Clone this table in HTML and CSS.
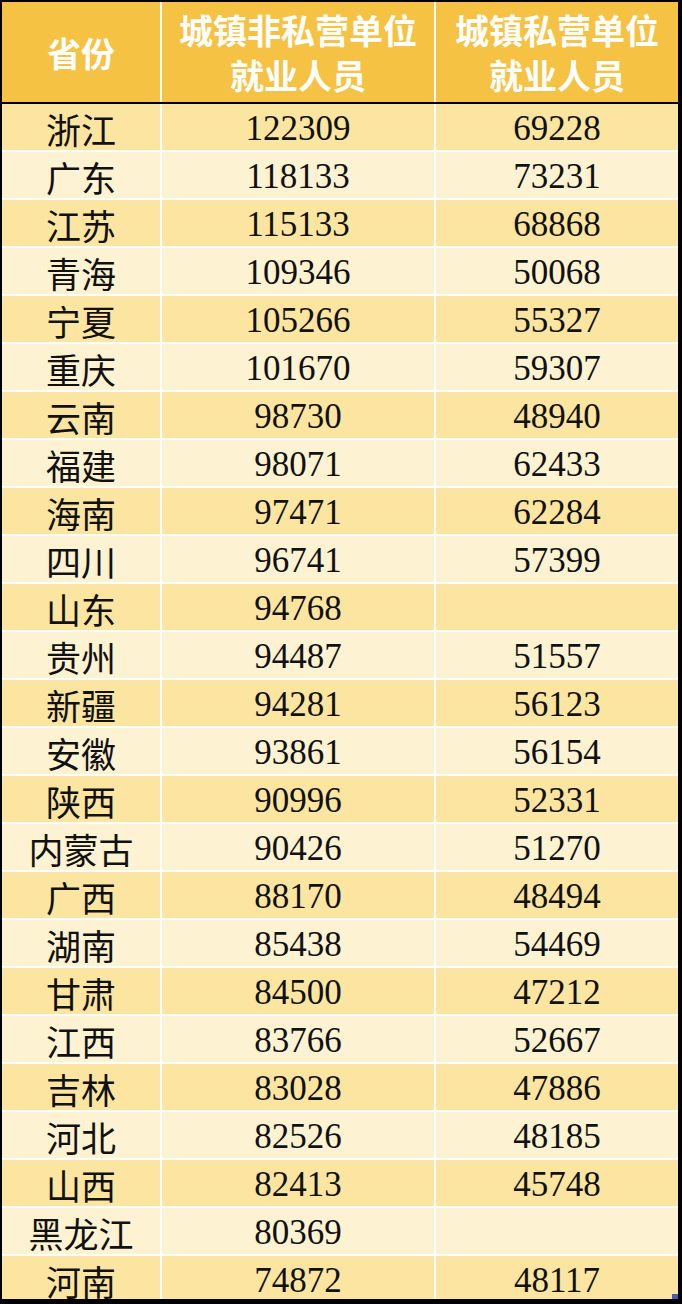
FILE: index.html
```html
<!DOCTYPE html>
<html lang="zh">
<head>
<meta charset="utf-8">
<link rel="stylesheet" href="styles.css">
</head>
<body>
<div class="sheet">
  <div class="head">
    <div class="hcell"><span class="hl">省份</span></div>
    <div class="hcell"><span class="hl">城镇非私营单位</span><span class="hl">就业人员</span></div>
    <div class="hcell"><span class="hl">城镇私营单位</span><span class="hl">就业人员</span></div>
  </div>
  <div class="rows">
    <div class="c odd">浙江</div><div class="c odd">122309</div><div class="c odd">69228</div>
    <div class="c even">广东</div><div class="c even">118133</div><div class="c even">73231</div>
    <div class="c odd">江苏</div><div class="c odd">115133</div><div class="c odd">68868</div>
    <div class="c even">青海</div><div class="c even">109346</div><div class="c even">50068</div>
    <div class="c odd">宁夏</div><div class="c odd">105266</div><div class="c odd">55327</div>
    <div class="c even">重庆</div><div class="c even">101670</div><div class="c even">59307</div>
    <div class="c odd">云南</div><div class="c odd">98730</div><div class="c odd">48940</div>
    <div class="c even">福建</div><div class="c even">98071</div><div class="c even">62433</div>
    <div class="c odd">海南</div><div class="c odd">97471</div><div class="c odd">62284</div>
    <div class="c even">四川</div><div class="c even">96741</div><div class="c even">57399</div>
    <div class="c odd">山东</div><div class="c odd">94768</div><div class="c odd"></div>
    <div class="c even">贵州</div><div class="c even">94487</div><div class="c even">51557</div>
    <div class="c odd">新疆</div><div class="c odd">94281</div><div class="c odd">56123</div>
    <div class="c even">安徽</div><div class="c even">93861</div><div class="c even">56154</div>
    <div class="c odd">陕西</div><div class="c odd">90996</div><div class="c odd">52331</div>
    <div class="c even">内蒙古</div><div class="c even">90426</div><div class="c even">51270</div>
    <div class="c odd">广西</div><div class="c odd">88170</div><div class="c odd">48494</div>
    <div class="c even">湖南</div><div class="c even">85438</div><div class="c even">54469</div>
    <div class="c odd">甘肃</div><div class="c odd">84500</div><div class="c odd">47212</div>
    <div class="c even">江西</div><div class="c even">83766</div><div class="c even">52667</div>
    <div class="c odd">吉林</div><div class="c odd">83028</div><div class="c odd">47886</div>
    <div class="c even">河北</div><div class="c even">82526</div><div class="c even">48185</div>
    <div class="c odd">山西</div><div class="c odd">82413</div><div class="c odd">45748</div>
    <div class="c even">黑龙江</div><div class="c even">80369</div><div class="c even"></div>
    <div class="c odd">河南</div><div class="c odd">74872</div><div class="c odd">48117</div>
  </div>
  <div class="handle"></div>
</div>
</body>
</html>
```
FILE: styles.css
```css
html, body {
  margin: 0;
  padding: 0;
  background: #000;
}
.sheet {
  position: relative;
  width: 682px;
  height: 1304px;
  box-sizing: border-box;
  border-style: solid;
  border-color: #000;
  border-width: 2px 4px 5px 2px;
  background: #fff;
  overflow: hidden;
}
.head {
  display: grid;
  grid-template-columns: 158px 272px 242px;
  column-gap: 2px;
  background: #fff;
  border-bottom: 2px solid #000;
}
.hcell {
  height: 100px;
  background: #f6c244;
  color: #fff;
  font-family: "Noto Sans CJK SC", sans-serif;
  font-weight: 700;
  font-size: 34px;
  display: flex;
  flex-direction: column;
  align-items: center;
  justify-content: center;
  text-align: center;
  white-space: nowrap;
}
.hl {
  display: block;
  height: 45px;
  line-height: 45px;
}
.rows {
  display: grid;
  grid-template-columns: 158px 272px 242px;
  grid-auto-rows: 46px;
  gap: 2px;
  background: #fff;
}
.c {
  box-sizing: border-box;
  padding-top: 3px;
  font-family: "Liberation Serif", "Noto Sans CJK SC", serif;
  font-size: 35px;
  color: #111;
  display: flex;
  align-items: center;
  justify-content: center;
  white-space: nowrap;
}
.odd { background: #fbe5a0; }
.even { background: #fdf2d1; }
.handle {
  position: absolute;
  right: -2px;
  bottom: -3px;
  width: 8px;
  height: 8px;
  background: #4b5cb3;
}
```
